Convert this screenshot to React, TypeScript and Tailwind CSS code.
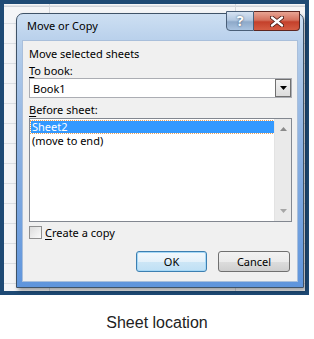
import React from "react";

const ui = { fontFamily: '"Noto Sans", "Open Sans", sans-serif' };

function HelpBtn() {
  return (
    <div className="w-[28px] h-[20px] rounded-bl-[4px] border border-[#4a5f78] bg-[linear-gradient(#d6e3f2_0%,#b3c8e1_45%,#8ea9c9_55%,#a9c3e0_100%)] flex items-center justify-center text-white text-[14px] font-bold leading-none" style={{ textShadow: "0 0 2px #2b3f57" }}>
      ?
    </div>
  );
}

function CloseBtn() {
  return (
    <div className="w-[46px] h-[20px] rounded-br-[4px] border border-l-0 border-[#5d2620] bg-[linear-gradient(#e8a493_0%,#d4715d_45%,#c4402b_55%,#d55d43_100%)] flex items-center justify-center">
      <svg width="14" height="11" viewBox="0 0 14 11">
        <path d="M2 1.5 L12 9.5 M12 1.5 L2 9.5" stroke="#40140e" strokeWidth="4" strokeLinecap="round" />
        <path d="M2 1.5 L12 9.5 M12 1.5 L2 9.5" stroke="#ffffff" strokeWidth="2.4" strokeLinecap="round" />
      </svg>
    </div>
  );
}

export default function App() {
  return (
    <div className="w-[314px] h-[339px] bg-white" style={ui}>
      <div className="w-[309px] h-[295px] border-4 border-[#1e4a75] bg-[#f4f5f7] bg-[linear-gradient(90deg,transparent_45px,#d4d7dc_45px,#d4d7dc_46px,transparent_46px,transparent_231px,#d4d7dc_231px,#d4d7dc_232px,transparent_232px),linear-gradient(#f4f5f7_0,#f4f5f7_1px,#cfd3d9_2px,#cfd3d9_3px,transparent_3px),repeating-linear-gradient(transparent_0,transparent_19px,#dcdfe3_19px,#dcdfe3_20px)] pl-[12px] pt-[9px]">
        <div className="w-[288px] h-[275px] rounded-t-[7px] border border-[#3f5368] bg-[linear-gradient(#cddff2_0%,#b4cdea_12%,#8fb3e2_45%,#5f95dc_100%)] flex flex-col shadow-[2px_3px_4px_rgba(0,0,0,0.35)]">
          <div className="h-[26px] flex items-start relative">
            <span className="text-[11px] text-black pl-[10px] pt-[4px] leading-[16px]">Move or Copy</span>
            <div className="absolute right-[3px] top-[-3px] flex">
              <HelpBtn />
              <CloseBtn />
            </div>
          </div>
          <div className="mx-[5px] mb-[5px] flex-1 border border-[#a9bfdb] bg-[#f0f0f0] px-[6px] pt-[5px] text-[11px] leading-[15px] text-black flex flex-col">
            <div>Move selected sheets</div>
            <div className="mt-[2px]"><span className="underline underline-offset-2">T</span>o book:</div>
            <div className="h-[20px] w-[263px] border border-[#abadb3] bg-white flex items-center">
              <span className="pl-[3px] flex-1">Book1</span>
              <div className="w-[16px] h-[18px] border border-[#707070] bg-[linear-gradient(#f2f2f2,#dcdcdc)] flex items-center justify-center">
                <svg width="7" height="4" viewBox="0 0 7 4"><path d="M0 0 H7 L3.5 4 Z" fill="#000" /></svg>
              </div>
            </div>
            <div className="mt-[4px]"><span className="underline underline-offset-2">B</span>efore sheet:</div>
            <div className="mt-[1px] h-[104px] w-[263px] border border-[#828790] bg-white flex">
              <div className="flex-1 pt-[2px] pl-[1px]">
                <div className="h-[12px] bg-[#3399ff] text-white leading-[12px] pl-[1px] outline outline-1 outline-dotted outline-[#e8a05a]">Sheet2</div>
                <div className="h-[14px] leading-[14px] pl-[1px] mt-[1px]">(move to end)</div>
              </div>
              <div className="w-[17px] bg-[#eaeaea] border-l border-[#e3e3e3] flex flex-col justify-between items-center py-[8px]">
                <svg width="7" height="4" viewBox="0 0 7 4"><path d="M0 4 H7 L3.5 0 Z" fill="#8a8a8a" /></svg>
                <svg width="7" height="4" viewBox="0 0 7 4"><path d="M0 0 H7 L3.5 4 Z" fill="#a6a6a6" /></svg>
              </div>
            </div>
            <div className="mt-[3px] flex items-center">
              <div className="w-[13px] h-[13px] border border-[#8f8f8f] bg-[linear-gradient(135deg,#dcdcdc,#fbfbfb)]" />
              <span className="ml-[3px]"><span className="underline underline-offset-2">C</span>reate a copy</span>
            </div>
            <div className="mt-auto mb-[9px] flex justify-end gap-[11px] pr-[1px]">
              <div className="w-[71px] h-[21px] rounded-[3px] border border-[#3c7fb1] bg-[linear-gradient(#f2f8fc_0%,#e4f1fa_50%,#cde6f6_51%,#bfe0f5_100%)] flex items-center justify-center shadow-[inset_0_0_0_1px_#a6d8f6]">OK</div>
              <div className="w-[72px] h-[21px] rounded-[3px] border border-[#707070] bg-[linear-gradient(#f2f2f2_0%,#ebebeb_50%,#dddddd_51%,#cfcfcf_100%)] flex items-center justify-center">Cancel</div>
            </div>
          </div>
        </div>
      </div>
      <div className="text-center text-[16px] text-[#222] mt-[19px] leading-[18px]" style={{ fontFamily: '"Liberation Sans", Arial, sans-serif' }}>
        Sheet location
      </div>
    </div>
  );
}
